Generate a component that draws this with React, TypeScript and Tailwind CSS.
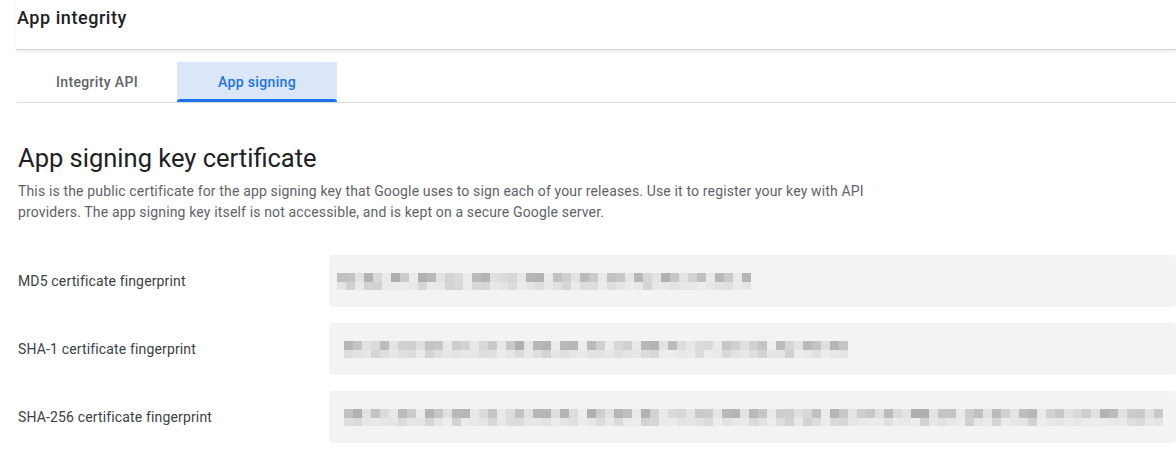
import { useMemo } from "react";

const font = { fontFamily: "Roboto, 'Liberation Sans', sans-serif" };

function rng(seed: number) {
  let s = seed;
  return () => {
    s = (s * 1103515245 + 12345) % 2147483648;
    return s / 2147483648;
  };
}

function shade(v: number) {
  // v in 0..1, 0 = near background, 1 = darkest
  const c = Math.round(236 - v * 80);
  return `rgb(${c},${c + 1},${c + 3})`;
}

function Mosaic({ cols, seed, offset }: { cols: number; seed: number; offset: number }) {
  const rows = useMemo(() => {
    const r = rng(seed);
    const top: number[] = [];
    const bottom: number[] = [];
    for (let i = 0; i < cols; i++) {
      const sep = i % 3 === 2;
      top.push(sep ? r() * 0.2 : 0.2 + r() * 0.6);
      bottom.push(sep ? r() * 0.1 : r() * 0.35);
    }
    return [top, bottom];
  }, [cols, seed]);

  return (
    <div className="flex flex-col" style={{ marginLeft: offset }}>
      {rows.map((row, ri) => (
        <div key={ri} className={ri === 0 ? "flex h-[9px]" : "flex h-[8px]"}>
          {row.map((v, i) => (
            <div key={i} className="w-[9px] shrink-0" style={{ backgroundColor: shade(v) }} />
          ))}
        </div>
      ))}
    </div>
  );
}

const fingerprints = [
  { label: "MD5 certificate fingerprint", cols: 46, seed: 7, offset: 6 },
  { label: "SHA-1 certificate fingerprint", cols: 56, seed: 21, offset: 13 },
  { label: "SHA-256 certificate fingerprint", cols: 91, seed: 42, offset: 13 },
];

export default function App() {
  return (
    <div className="h-[451px] w-[1176px] overflow-hidden bg-white" style={font}>
      {/* page header */}
      <div className="pl-[16px]">
        <div className="h-[50px] border-b border-[#d4d4d4] pl-[1px] pt-[6px] shadow-[0_2px_3px_rgba(0,0,0,0.07)]">
          <h1 className="text-[18px] font-medium leading-[24px] tracking-[0.55px] text-[#202124]">App integrity</h1>
        </div>
      </div>

      {/* tabs */}
      <div className="ml-[17px] mt-[12px] flex border-b border-[#dadce0]">
        <div className="flex h-[40px] w-[160px] items-center justify-center text-[14px] font-medium tracking-[0.35px] text-[#5f6368]">
          Integrity API
        </div>
        <div className="relative flex h-[40px] w-[160px] items-center justify-center bg-[#dbe6f8] text-[14px] font-medium tracking-[0.35px] text-[#1a73e8]">
          App signing
          <div className="absolute bottom-0 left-0 right-0 h-[3px] rounded-t-[3px] bg-[#1a73e8]" />
        </div>
      </div>

      {/* content */}
      <div className="pl-[18px]">
        <h2 className="mt-[39px] text-[25.5px] font-normal leading-[32px] text-[#202124]">
          App signing key certificate
        </h2>
        <p className="mt-[7px] w-[880px] text-[14px] leading-[21px] tracking-[0.15px] text-[#5f6368]">
          This is the public certificate for the app signing key that Google uses to sign each of your releases. Use it to
          register your key with API providers. The app signing key itself is not accessible, and is kept on a secure
          Google server.
        </p>

        <div className="mt-[32px] flex flex-col gap-[16px]">
          {fingerprints.map((f) => (
            <div key={f.label} className="flex items-center">
              <div className="w-[311px] shrink-0 text-[14px] tracking-[0.15px] text-[#3c4043]">{f.label}</div>
              <div className="flex h-[52px] flex-1 items-center rounded-[4px] bg-[#f1f3f4] pl-[2px]">
                <Mosaic cols={f.cols} seed={f.seed} offset={f.offset} />
              </div>
            </div>
          ))}
        </div>
      </div>
    </div>
  );
}
